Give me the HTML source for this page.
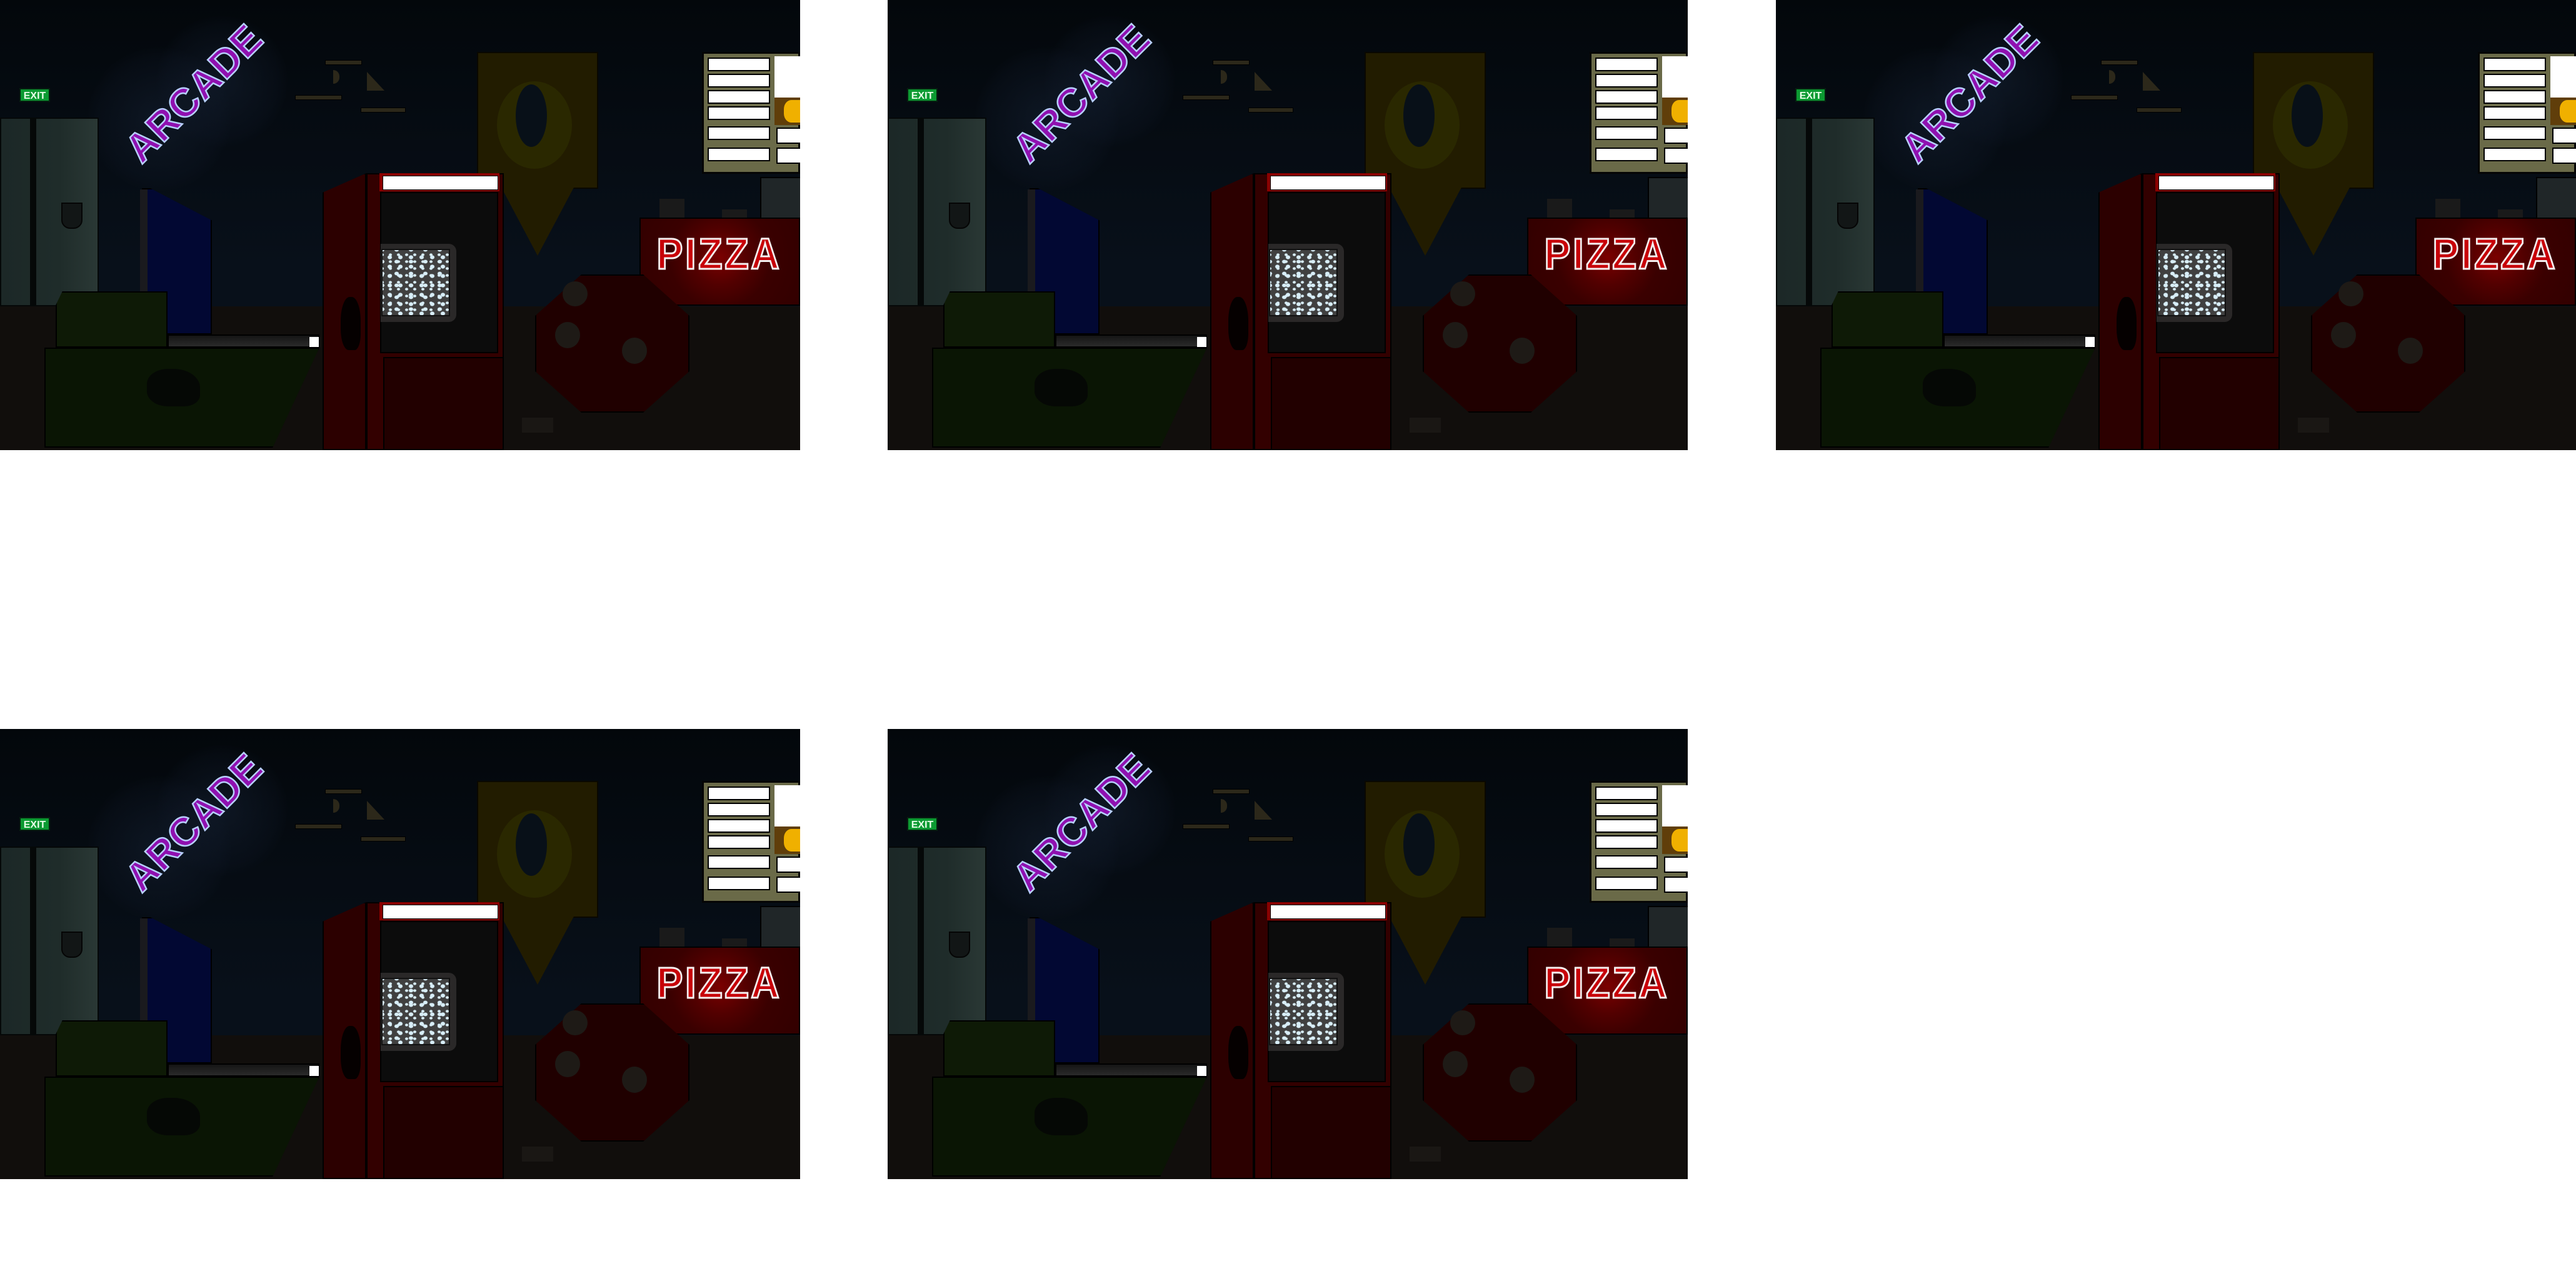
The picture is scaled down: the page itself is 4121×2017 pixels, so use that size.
<!DOCTYPE html>
<html><head><meta charset="utf-8"><style>
html,body{margin:0;padding:0;background:#fff;width:4121px;height:2017px;overflow:hidden;position:relative}
.p{position:absolute;width:1280px;height:720px;overflow:hidden;background:linear-gradient(#03070b,#08101a 60%,#0a121b);}
.p div{position:absolute}
.floor{left:0;top:490px;width:1280px;height:230px;background:#110e0c}
.glow{border-radius:50%;background:radial-gradient(circle,rgba(30,45,70,.35),rgba(20,30,50,.15) 60%,rgba(0,0,0,0) 72%)}
.exit{left:31px;top:141px;width:49px;height:22px;background:#0c9a32;border:2px solid #062010;color:#e8ffe8;font:bold 16px "Liberation Sans Narrow","Liberation Sans",sans-serif;text-align:center;line-height:22px;box-sizing:border-box}
.door{left:0;top:188px;width:158px;height:302px;background:linear-gradient(90deg,#1c2827,#1f2c2a 60%,#2a3835);border:2px solid #050808;box-sizing:border-box}
.arc{left:150px;top:120px;width:320px;font:bold 64px "Liberation Sans Narrow","Liberation Sans",sans-serif;color:#9010b0;-webkit-text-stroke:2.5px #b8d0ff;letter-spacing:1px;transform:rotate(-45deg);transform-origin:center;text-align:center}
.rul{background:#2c281a;height:6px;border:1px solid #000}
.poster{left:763px;top:83px;width:190px;height:215px;background:#221c00;border:2px solid #0a0800}
.menu{left:1123px;top:83px;width:157px;height:195px;background:#6a6a48;border:3px solid #050505;box-sizing:border-box}
.row{left:6px;width:100px;height:22px;background:#fff;border:2px solid #000;box-sizing:border-box}
.counter{left:1023px;top:348px;width:257px;height:141px;background:radial-gradient(circle at 127px 62px,#7a0000,#520000 30%,#3a0000 55%,#320000);border:2px solid #000;box-sizing:border-box}
.pizza{left:1040px;top:372px;width:208px;height:68px;font:bold 70px "Liberation Sans Narrow","Liberation Sans",sans-serif;color:#c80008;-webkit-text-stroke:3px #f4f0f0;text-align:center;line-height:68px;letter-spacing:4px;transform:scaleX(.9)}
</style></head><body>

<div class="p" style="left:0;top:0">
<div class="floor"></div>
<div class="glow" style="left:140px;top:75px;width:230px;height:230px"></div>
<div class="glow" style="left:250px;top:25px;width:210px;height:210px"></div>
<div class="exit">EXIT</div>
<div class="door"><div style="left:46px;top:0;width:10px;height:300px;background:#050808"></div><div style="left:96px;top:134px;width:30px;height:38px;background:#121616;border:2px solid #050505;border-radius:0 0 14px 14px"></div></div>
<div class="arc" style="top:112px">ARCADE</div>
<div class="rul" style="left:520px;top:96px;width:57px"></div>
<div class="rul" style="left:472px;top:152px;width:73px"></div>
<div class="rul" style="left:577px;top:172px;width:70px"></div>
<div style="left:533px;top:112px;width:10px;height:22px;background:#2c281a;border-radius:0 12px 12px 0"></div>
<div style="left:587px;top:115px;width:0;height:0;border-left:28px solid #2c281a;border-top:30px solid transparent"></div>
<div class="poster"><div style="left:30px;top:45px;width:120px;height:140px;border-radius:50%;background:#2a2800"></div><div style="left:60px;top:50px;width:50px;height:100px;border-radius:50%;background:#081018"></div></div>
<div style="left:800px;top:296px;width:0;height:0;border-left:60px solid transparent;border-right:60px solid transparent;border-top:113px solid #221c00"></div>
<div style="left:227px;top:301px;width:112px;height:234px;background:#020833;border:2px solid #000;box-sizing:border-box;clip-path:polygon(0 0,12% 0,100% 22%,100% 100%,0 100%)"></div>
<div style="left:224px;top:303px;width:12px;height:200px;background:#1a1a1e"></div>
<div style="left:268px;top:535px;width:243px;height:21px;background:linear-gradient(#151515,#2a2a2a);border:2px solid #000;box-sizing:border-box"></div>
<div style="left:495px;top:539px;width:15px;height:16px;background:#fff"></div>
<div style="left:89px;top:466px;width:179px;height:90px;background:#0e1a06;border:2px solid #000;box-sizing:border-box;clip-path:polygon(6% 0,100% 0,100% 100%,0 100%,0 25%)"></div>
<div style="left:71px;top:556px;width:440px;height:160px;background:#0a1504;border:2px solid #000;box-sizing:border-box;clip-path:polygon(0 0,100% 0,83% 100%,0 100%)"></div>
<div style="left:235px;top:590px;width:85px;height:60px;background:#050805;border-radius:40% 50% 30% 40%"></div>
<div style="left:516px;top:277px;width:70px;height:443px;background:#2c0000;border:2px solid #000;box-sizing:border-box;clip-path:polygon(0 7%,100% 0,100% 100%,0 100%)"></div>
<div style="left:586px;top:277px;width:220px;height:443px;background:#330000;border:2px solid #000;box-sizing:border-box"></div>
<div style="left:607px;top:277px;width:192px;height:29px;background:#8a0000"></div>
<div style="left:612px;top:281px;width:183px;height:21px;background:#fff;border:1px solid #000"></div>
<div style="left:608px;top:307px;width:189px;height:258px;background:#0c0c0c;border:2px solid #000;box-sizing:border-box"></div>
<div style="left:609px;top:390px;width:121px;height:125px;background:#2a2828;border-radius:0 12px 12px 0"></div>
<div style="left:610px;top:398px;width:110px;height:108px;background:#404040;background-image:radial-gradient(#d8eef8 3px,transparent 4px),radial-gradient(#d8eef8 3px,transparent 4px),radial-gradient(#d8eef8 2px,transparent 3px);background-size:17px 15px,23px 19px,13px 11px;background-position:3px 4px,11px 9px,6px 2px;border:2px solid #111;box-sizing:border-box"></div>
<div style="left:613px;top:571px;width:193px;height:149px;background:#220000;border:2px solid #000;box-sizing:border-box"></div>
<div style="left:545px;top:475px;width:32px;height:85px;background:#050000;border-radius:45% 45% 30% 40%"></div>
<div style="left:1216px;top:283px;width:64px;height:65px;background:#202628;border:2px solid #000"></div>
<div style="left:1055px;top:318px;width:40px;height:32px;background:#1a1a1a"></div>
<div style="left:1155px;top:335px;width:40px;height:16px;background:#1a1a1a"></div>
<div class="counter"></div>
<div class="pizza">PIZZA</div>
<div style="left:856px;top:439px;width:247px;height:221px;background:#200000;border:2px solid #000;box-sizing:border-box;clip-path:polygon(30% 0,70% 0,100% 30%,100% 70%,70% 100%,30% 100%,0 70%,0 30%)"></div>
<div style="left:900px;top:450px;width:40px;height:40px;border-radius:50%;background:#1e1a16"></div>
<div style="left:888px;top:515px;width:40px;height:42px;border-radius:50%;background:#1e1a16"></div>
<div style="left:995px;top:540px;width:40px;height:42px;border-radius:50%;background:#1e1a16"></div>
<div style="left:835px;top:668px;width:50px;height:24px;background:#1a1714"></div>
<div class="menu">
<div class="row" style="top:6px"></div><div class="row" style="top:32px"></div><div class="row" style="top:58px"></div><div class="row" style="top:84px"></div><div class="row" style="top:116px"></div><div class="row" style="top:150px"></div>
<div style="left:113px;top:4px;width:44px;height:66px;background:#fff"></div>
<div style="left:113px;top:70px;width:44px;height:44px;background:#603e0a"></div>
<div style="left:128px;top:74px;width:30px;height:36px;background:#f0b000;border-radius:40% 0 0 40%"></div>
<div style="left:116px;top:118px;width:41px;height:22px;background:#fff;border:2px solid #000"></div>
<div style="left:116px;top:150px;width:41px;height:22px;background:#fff;border:2px solid #000"></div>
</div>
</div>

<script>
var src=document.querySelector('.p').outerHTML;
[[1420,0],[2841,0],[0,1166],[1420,1166]].forEach(function(c){
 var d=document.createElement('div');d.innerHTML=src;var e=d.firstChild;
 e.style.left=c[0]+'px';e.style.top=c[1]+'px';document.body.appendChild(e);
});
</script>
</body></html>
